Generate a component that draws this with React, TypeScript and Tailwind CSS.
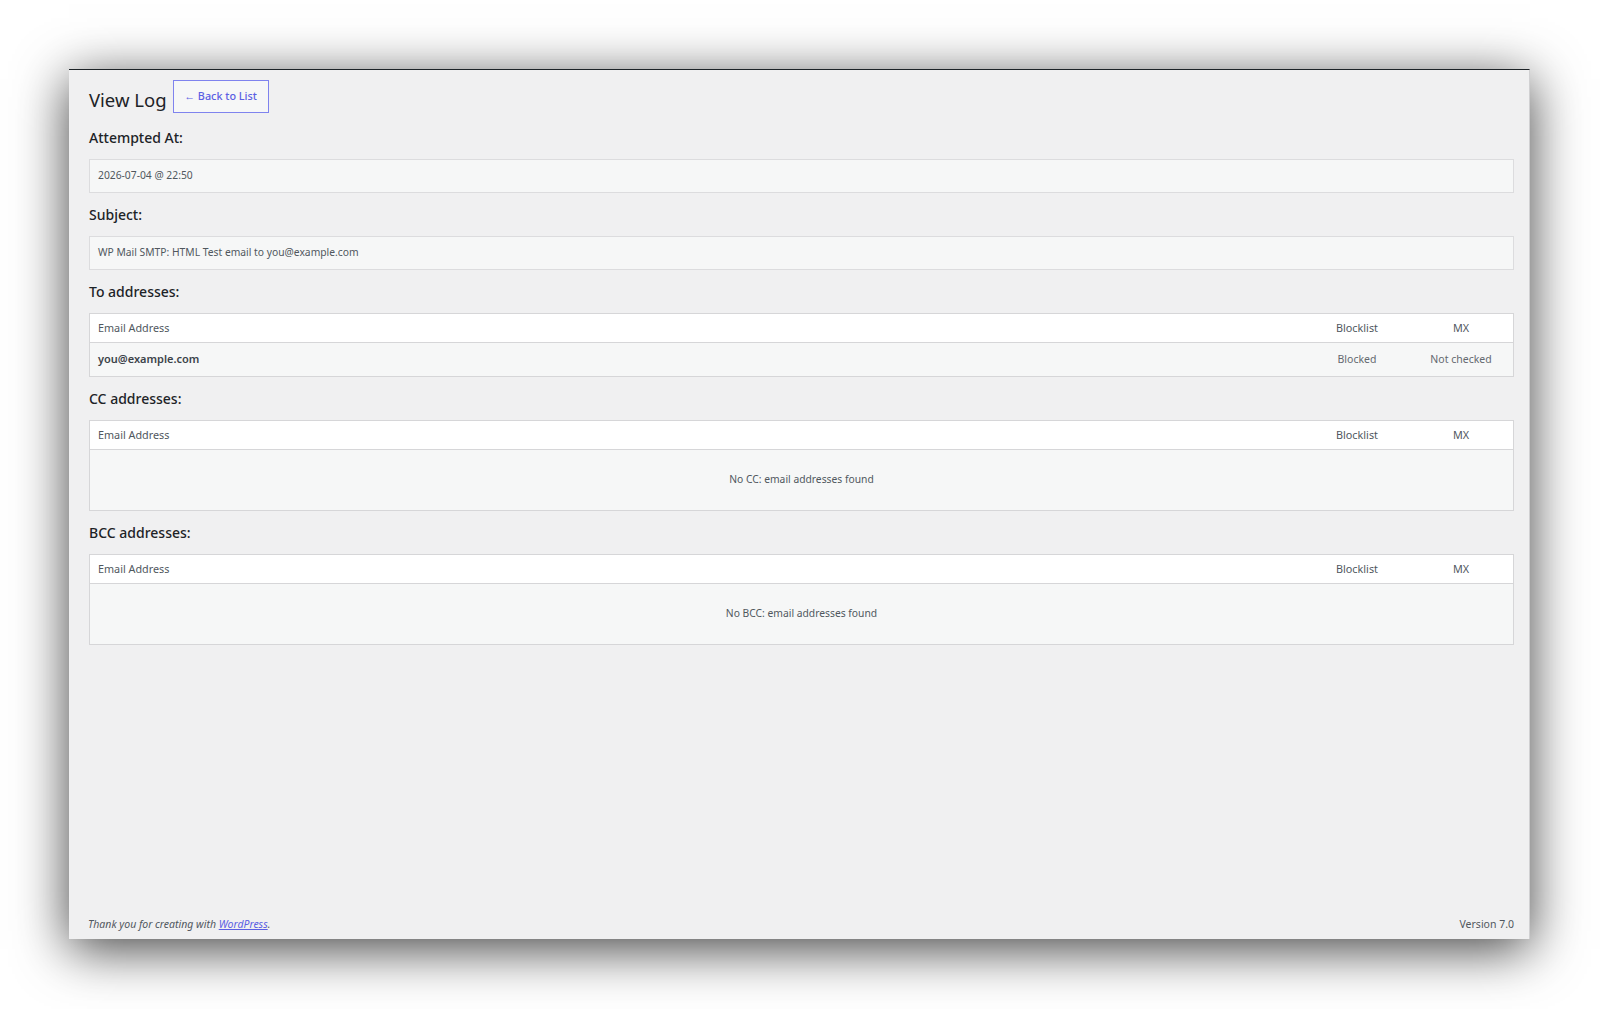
import React from "react";

type AddressRow = { email: string; blocklist: string; mx: string };

const FONT = { fontFamily: '"Noto Sans", "Open Sans", Arial, sans-serif' };

function Label({ children, first }: { children: React.ReactNode; first?: boolean }) {
  return (
    <div
      className={`${first ? "mt-[15px]" : "mt-[12px]"} mb-[11px] h-[20px] text-[14px] leading-[20px] font-medium text-[#1d2327]`}
    >
      {children}
    </div>
  );
}

function ReadonlyField({ value }: { value: string }) {
  return (
    <div className="h-[34px] border border-[#dcdcde] bg-[#f6f7f7] pl-[8px] flex items-center text-[10.3px] text-[#50575e]">
      {value}
    </div>
  );
}

function AddressTable({ rows, emptyText }: { rows: AddressRow[]; emptyText: string }) {
  return (
    <div className="border border-[#d6d6d8] text-[10.8px]">
      <div className="h-[29px] bg-white border-b border-[#d6d6d8] flex items-center text-[#50575e]">
        <div className="flex-1 pl-[8px]">Email Address</div>
        <div className="w-[104px] text-center">Blocklist</div>
        <div className="w-[104px] text-center">MX</div>
      </div>
      {rows.length === 0 ? (
        <div className="h-[60px] bg-[#f6f7f7] flex items-center justify-center text-[10.3px] text-[#50575e]">
          {emptyText}
        </div>
      ) : (
        rows.map((r) => (
          <div key={r.email} className="h-[33px] bg-[#f6f7f7] flex items-center">
            <div className="flex-1 pl-[8px] text-[11px] font-semibold text-[#3c434a]">{r.email}</div>
            <div className="w-[104px] text-center text-[10.5px] text-[#646970]">{r.blocklist}</div>
            <div className="w-[104px] text-center text-[10.5px] text-[#646970]">{r.mx}</div>
          </div>
        ))
      )}
    </div>
  );
}

export default function App() {
  return (
    <div className="min-h-screen bg-white pt-[69px] pl-[69px]" style={FONT}>
      <div className="w-[1461px] h-[870px] bg-[#f0f0f1] border-t border-t-[#1d2327] border-r border-r-[#d0d0d2] shadow-[0_10px_50px_rgba(0,0,0,0.75)] flex flex-col">
        <div className="pl-[20px] pr-[15px] pt-[9px] flex-1">
          <div className="flex items-start">
            <h1 className="mt-[9px] text-[18.5px] leading-[24px] font-normal text-[#1d2327]">View Log</h1>
            <a className="ml-[6px] mt-[1px] h-[33px] w-[96px] border border-[#7f83ee] bg-[#f6f7f7] flex items-center justify-center text-[10.8px] font-medium text-[#5b5fe3] no-underline">
              ← Back to List
            </a>
          </div>

          <Label first>Attempted At:</Label>
          <ReadonlyField value="2026-07-04 @ 22:50" />

          <Label>Subject:</Label>
          <ReadonlyField value="WP Mail SMTP: HTML Test email to you@example.com" />

          <Label>To addresses:</Label>
          <AddressTable
            rows={[{ email: "you@example.com", blocklist: "Blocked", mx: "Not checked" }]}
            emptyText="No To: email addresses found"
          />

          <Label>CC addresses:</Label>
          <AddressTable rows={[]} emptyText="No CC: email addresses found" />

          <Label>BCC addresses:</Label>
          <AddressTable rows={[]} emptyText="No BCC: email addresses found" />
        </div>

        <div className="pl-[19px] pr-[15px] pb-[7px] flex justify-between text-[10.5px] leading-[16px] text-[#50575e]">
          <span className="italic">
            Thank you for creating with{" "}
            <a className="underline text-[#5b5fe3]">WordPress</a>.
          </span>
          <span>Version 7.0</span>
        </div>
      </div>
    </div>
  );
}
